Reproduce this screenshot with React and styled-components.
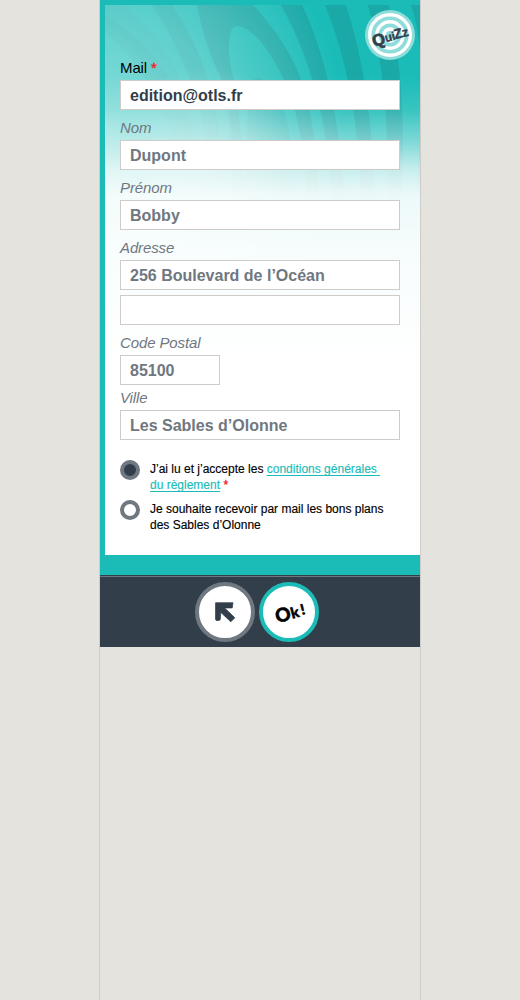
import React from "react";
import styled, { createGlobalStyle } from "styled-components";

const teal = "#1bbcb8";
const navy = "#323e4a";
const slate = "#6f7780";
const line = "#cfcbc8";

const GlobalStyle = createGlobalStyle`
  *, *::before, *::after { box-sizing: border-box; }
  body {
    margin: 0;
    background: #e4e3de;
    font-family: "Liberation Sans", Arial, sans-serif;
    color: #000;
  }
`;

const Column = styled.main`
  width: 322px;
  min-height: 1000px;
  margin: 0 0 0 99px;
  border: solid ${line};
  border-width: 0 1px;
`;

const Frame = styled.section`
  height: 575px;
  padding: 5px 0 20px 5px;
  background: ${teal};
`;

const Panel = styled.div`
  display: grid;
  height: 550px;
  background: #fff;
  > * { grid-area: 1 / 1; }
`;

const Backdrop = styled.svg`
  display: block;
  width: 315px;
  height: 550px;
`;

const Logo = styled.svg`
  width: 50px;
  height: 50px;
  margin: 5px 5px 0 0;
  justify-self: end;
`;

const Form = styled.form`
  display: flex;
  flex-direction: column;
  align-items: flex-start;
  padding: 51px 0 0 15px;
`;

const Field = styled.label`
  display: flex;
  flex-direction: column;
`;

const Caption = styled.span`
  height: 24px;
  line-height: 24px;
  font-size: 15px;
  letter-spacing: -0.12px;
  font-style: ${(p) => (p.$required ? "normal" : "italic")};
  color: ${(p) => (p.$required ? "#000" : slate)};
`;

const Input = styled.input`
  display: block;
  width: ${(p) => (p.$short ? 100 : 280)}px;
  height: 30px;
  margin-bottom: ${(p) => p.$gap ?? 6}px;
  padding: 2px 9px 0;
  border: 1px solid ${line};
  border-radius: 0;
  background: #fff;
  font: bold 16px "Liberation Sans", Arial, sans-serif;
  color: ${(p) => (p.$active ? navy : slate)};
  outline: none;
`;

const Star = styled.span`
  -webkit-text-stroke: 0.3px currentColor;
  color: #f5141c;
`;

const Options = styled.div`
  display: grid;
  gap: 8px;
  margin-top: 14px;
`;

const Option = styled.label`
  display: flex;
  gap: 10px;
  font-size: 12px;
  line-height: 16px;
  white-space: nowrap;
`;

const Radio = styled.span`
  flex: none;
  width: 20px;
  height: 20px;
  border: 4px solid ${slate};
  border-radius: 50%;
  background: ${(p) => (p.$checked ? navy : "#fff")};
`;

const OptionText = styled.span`
  padding-top: 1px;
  height: 32px;
  -webkit-text-stroke: 0.15px currentColor;
`;

const Rules = styled.a`
  color: ${teal};
  text-decoration: underline;
  text-underline-offset: 2px;
  white-space: pre;
`;

const Footer = styled.footer`
  display: flex;
  gap: 4px;
  height: 72px;
  padding: 5px 0 0 95px;
  border-top: 1px solid ${navy};
  background: linear-gradient(${slate} 1px, ${navy} 1px);
`;

const RoundButton = styled.button`
  display: grid;
  place-items: center;
  width: 60px;
  height: 60px;
  margin-top: 1px;
  padding: 0;
  border: 4px solid ${(p) => (p.$primary ? teal : slate)};
  border-radius: 50%;
  background: #fff;
`;

const Glyph = styled.svg`
  display: block;
  width: 52px;
  height: 52px;
`;

function Waves() {
  return (
    <Backdrop viewBox="105 5 315 550" aria-hidden="true">
      <defs>
        <linearGradient id="fade" x1="0" y1="5" x2="0" y2="360" gradientUnits="userSpaceOnUse">
          <stop offset="0" stopColor="#fff" stopOpacity="0" />
          <stop offset=".2" stopColor="#fff" stopOpacity="0" />
          <stop offset=".296" stopColor="#fff" stopOpacity=".13" />
          <stop offset=".38" stopColor="#fff" stopOpacity=".42" />
          <stop offset=".465" stopColor="#fff" stopOpacity=".76" />
          <stop offset=".535" stopColor="#fff" stopOpacity=".92" />
          <stop offset=".7" stopColor="#fff" stopOpacity=".965" />
          <stop offset="1" stopColor="#fff" />
        </linearGradient>
        <radialGradient id="glow" cx="105" cy="130" r="240" gradientUnits="userSpaceOnUse">
          <stop offset="0" stopColor="#e9fbfa" stopOpacity=".54" />
          <stop offset=".5" stopColor="#e9fbfa" stopOpacity=".32" />
          <stop offset="1" stopColor="#e9fbfa" stopOpacity="0" />
        </radialGradient>
        <radialGradient id="haze" cx="205" cy="150" r="85" gradientUnits="userSpaceOnUse">
          <stop offset="0" stopColor="#8fdedb" stopOpacity=".5" />
          <stop offset=".5" stopColor="#8fdedb" stopOpacity=".3" />
          <stop offset="1" stopColor="#8fdedb" stopOpacity="0" />
        </radialGradient>
      </defs>
      <path fill={teal} d="M105 5h315v355H105z" />
      <g fill="#1aa9a7">
        <path d="M105 16Q160 45 190 120L196 180H184Q166 85 105 32Z" opacity=".4" />
        <path d="M105 5H125Q165 42 180 80Q200 115 206 180H190Q185 110 150 75Q130 40 105 22Z" opacity=".25" />
        <path d="M152 5H172Q195 38 208 80Q220 120 224 180H211Q205 118 190 80Q176 40 152 5Z" opacity=".65" />
        <path
          fillRule="evenodd"
          d="M197 5H253Q288 43 301 80Q315 115 319 200H231Q235 130 222 80Q204 45 197 5ZM229 45Q229 26 237 26Q260 29 284 80Q303 120 307 200H245Q240 110 234 80Q228 60 229 45Z"
        />
        <path d="M246 200Q247 110 249 90Q253 76 260 78Q276 86 284 112Q294 145 295 200Z" opacity=".65" />
        <path d="M281 5H302Q336 75 345 200H332Q326 85 281 5Z" />
        <path d="M325 5H346Q372 85 375 200H361Q358 85 325 5Z" />
        <path d="M368 5H389Q407 85 402 200H387Q391 90 368 5Z" />
        <path d="M411 5H420V50Q418 26 411 5Z" />
        <path d="M420 130Q419 165 416 200H420Z" />
      </g>
      <path fill="url(#haze)" d="M105 5h315v355H105z" />
      <path fill="url(#glow)" d="M105 5h315v355H105z" />
      <path fill="url(#fade)" d="M105 5h315v355H105z" />
    </Backdrop>
  );
}

function QuizLogo() {
  return (
    <Logo viewBox="0 0 50 50" role="img" aria-label="QuiZz">
      <circle cx="25" cy="25" r="25" fill="#8edddb" />
      <circle cx="25" cy="25" r="20.3" fill="none" stroke="#fff" strokeWidth="3.4" />
      <circle cx="25" cy="25" r="13.2" fill="none" stroke="#fff" strokeWidth="3.4" />
      <circle cx="25" cy="25" r="7.8" fill="#fff" />
      <circle cx="25" cy="25" r="4" fill="#8edddb" />
      <g
        transform="rotate(-14 25 27)"
        fill={navy}
        stroke={navy}
        strokeWidth=".3"
        fontFamily="Liberation Sans, Arial, sans-serif"
        fontWeight="bold"
      >
        <text x="6.8" y="32.6" fontSize="16.5" strokeWidth=".7">Q</text>
        <text x="19.5" y="31" fontSize="12">ui</text>
        <text x="29.3" y="30.3" fontSize="14">Z</text>
        <text x="37.5" y="30.3" fontSize="13">z</text>
      </g>
    </Logo>
  );
}

export default function App() {
  return (
    <>
      <GlobalStyle />
      <Column>
        <Frame>
          <Panel>
            <Waves />
            <QuizLogo />
            <Form>
              <Field>
                <Caption $required>Mail <Star>*</Star></Caption>
                <Input $active defaultValue="edition@otls.fr" />
              </Field>
              <Field>
                <Caption>Nom</Caption>
                <Input defaultValue="Dupont" />
              </Field>
              <Field>
                <Caption>Prénom</Caption>
                <Input defaultValue="Bobby" />
              </Field>
              <Field>
                <Caption>Adresse</Caption>
                <Input $gap={5} defaultValue="256 Boulevard de l’Océan" />
              </Field>
              <Input aria-label="Adresse 2" />
              <Field>
                <Caption>Code Postal</Caption>
                <Input $short $gap={1} defaultValue="85100" />
              </Field>
              <Field>
                <Caption>Ville</Caption>
                <Input defaultValue="Les Sables d’Olonne" />
              </Field>
              <Options>
                <Option>
                  <Radio $checked />
                  <OptionText>
                    J’ai lu et j’accepte les <Rules>{"conditions générales "}</Rules>
                    <br />
                    <Rules>du règlement</Rules> <Star>*</Star>
                  </OptionText>
                </Option>
                <Option>
                  <Radio />
                  <OptionText>
                    Je souhaite recevoir par mail les bons plans
                    <br />
                    des Sables d’Olonne
                  </OptionText>
                </Option>
              </Options>
            </Form>
          </Panel>
        </Frame>
        <Footer>
          <RoundButton aria-label="Retour">
            <Glyph viewBox="0 0 52 52">
              <path
                d="M16.6 16.8H34L33.2 21.9H25.6L35.8 31.8L31.8 35.8L21.6 26.2L21.3 33.4L20.2 34.4H17.2L16.6 33.6Z"
                fill={navy}
                stroke={navy}
                strokeWidth=".8"
                strokeLinejoin="round"
              />
            </Glyph>
          </RoundButton>
          <RoundButton $primary aria-label="Ok">
            <Glyph viewBox="0 0 52 52">
              <g
                transform="rotate(-15 26 27)"
                fontFamily="Lato, sans-serif"
                fontWeight="900"
                stroke="#000"
                strokeWidth=".5"
              >
                <text x="12.1" y="33.8" fontSize="19">O</text>
                <text x="27.6" y="33.3" fontSize="15">k</text>
                <text x="38" y="32.3" fontSize="14.5">!</text>
              </g>
            </Glyph>
          </RoundButton>
        </Footer>
      </Column>
    </>
  );
}
